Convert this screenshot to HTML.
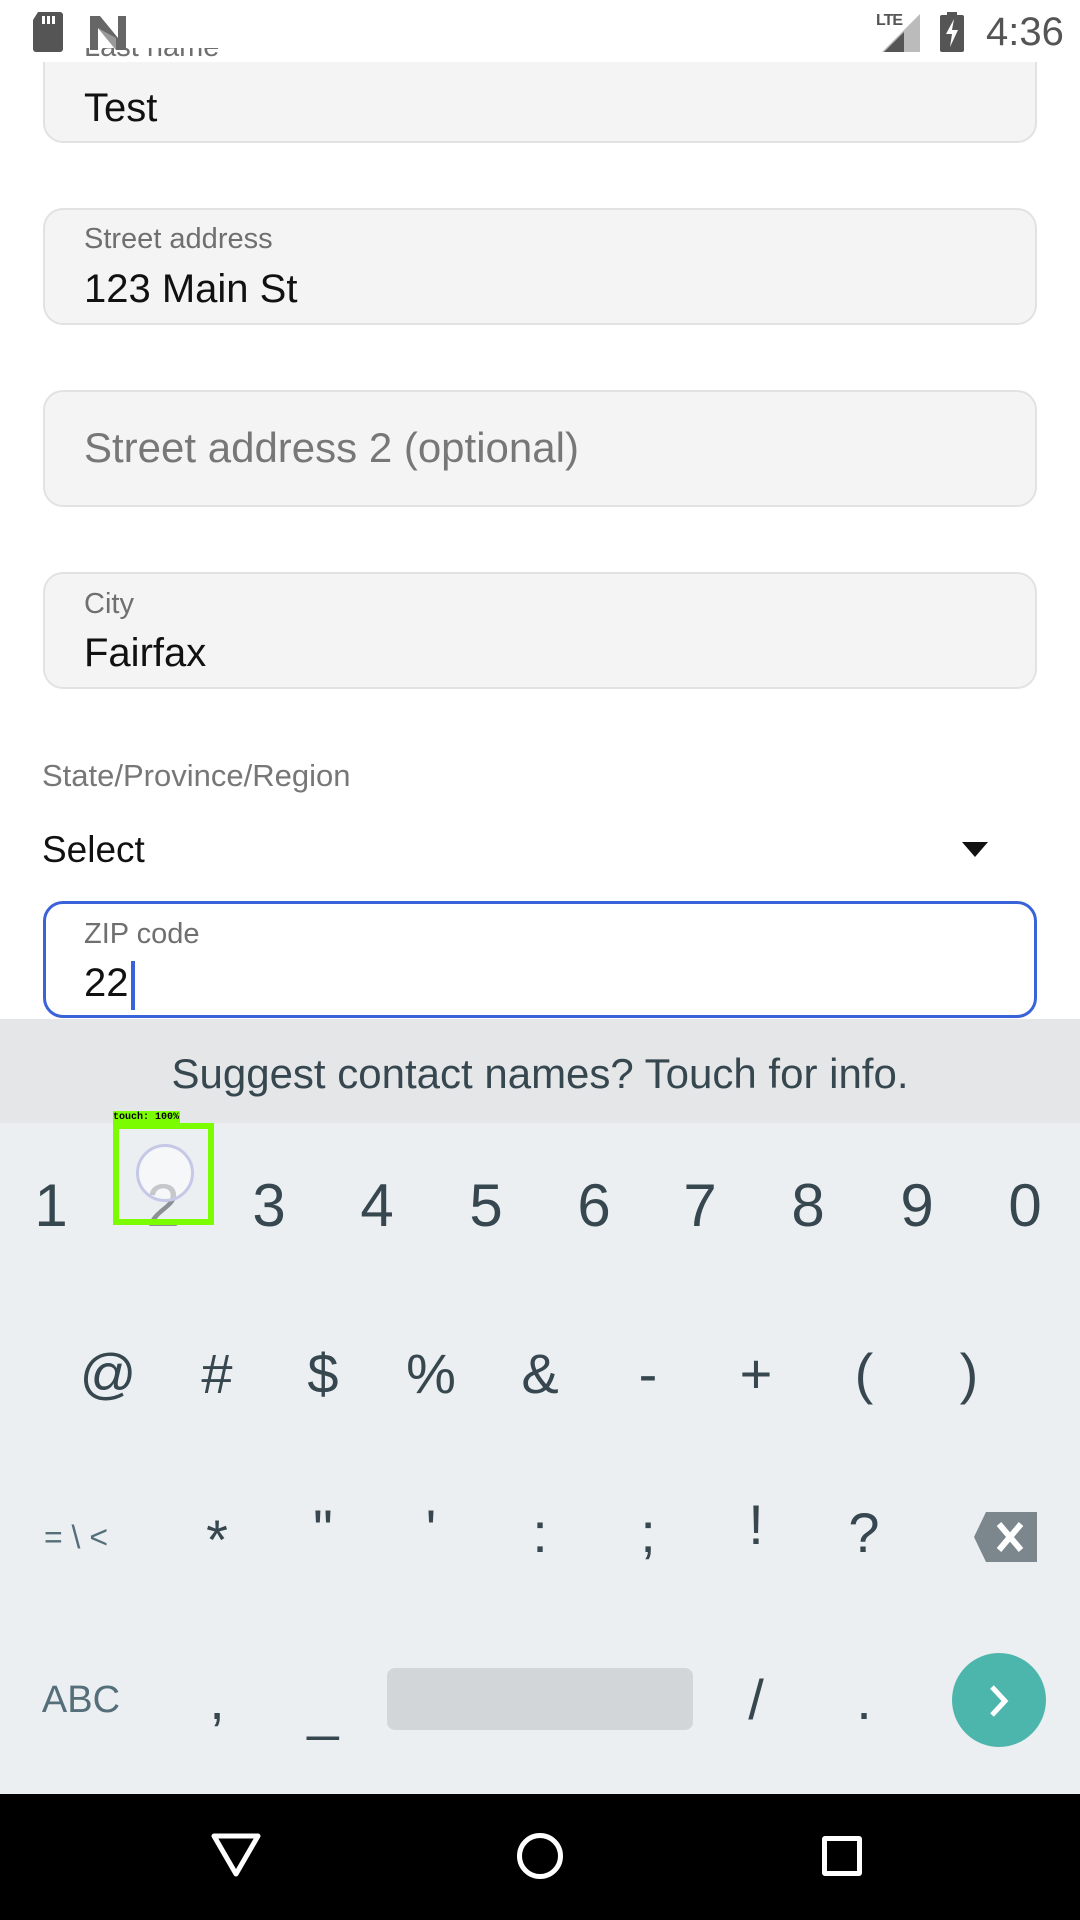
<!DOCTYPE html>
<html><head><meta charset="utf-8"><style>
*{margin:0;padding:0;box-sizing:border-box}
body{width:1080px;height:1920px;position:relative;overflow:hidden;background:#fff;font-family:"Liberation Sans",sans-serif}
.a{position:absolute}
.box{position:absolute;left:43px;width:994px;background:#f4f4f4;border:2px solid #e2e2e2;border-radius:20px}
.lbl{position:absolute;left:84px;font-size:29px;color:#6f6f6f}
.val{position:absolute;left:84px;font-size:40px;color:#111}
.k{position:absolute;transform:translate(-50%,-50%);color:#37474f;font-size:60px;line-height:1}
.s{font-size:56px}
</style></head><body>
<div class="box" style="top:20px;height:123px"></div>
<div class="a" style="left:0;top:0;width:1080px;height:62px;background:#fff"></div>
<div class="lbl" style="top:48px;height:14px;overflow:hidden;line-height:14px"><span style="position:relative;top:-8px">Last name</span></div>
<div class="val" style="top:86px">Test</div>
<svg class="a" style="left:30px;top:12px" width="36" height="40"><path d="M8 0H30a3 3 0 0 1 3 3V37a3 3 0 0 1-3 3H6a3 3 0 0 1-3-3V8Z" fill="#555"/><rect x="12" y="4" width="3" height="8" fill="#fff"/><rect x="17" y="4" width="3" height="8" fill="#fff"/><rect x="22" y="4" width="3" height="8" fill="#fff"/></svg>
<svg class="a" style="left:88px;top:14px" width="42" height="36"><path d="M2 2h10l18 22V2h8v34H28L10 14v22H2Z" fill="#666"/><path d="M10 14l18 22V24Z" fill="#999"/></svg>
<div class="a" style="left:876px;top:12px;font-size:16px;color:#555;font-weight:bold;letter-spacing:-1px">LTE</div>
<svg class="a" style="left:880px;top:14px" width="42" height="38"><path d="M40 0V38H2Z" fill="#bbb"/><path d="M24 18V38H4Z" fill="#555"/></svg>
<svg class="a" style="left:940px;top:12px" width="24" height="40"><rect x="7" y="0" width="10" height="4" fill="#555"/><rect x="0" y="3" width="24" height="37" rx="2" fill="#555"/><path d="M14 7L6 22h6l-2 13 8-17h-6z" fill="#fff"/></svg>
<div class="a" style="left:986px;top:10px;font-size:40px;color:#555">4:36</div>

<div class="box" style="top:208px;height:117px"></div>
<div class="lbl" style="top:223px">Street address</div>
<div class="val" style="top:267px">123 Main St</div>
<div class="box" style="top:390px;height:117px"></div>
<div class="a" style="left:84px;top:424px;font-size:42px;color:#777">Street address 2 (optional)</div>
<div class="box" style="top:572px;height:117px"></div>
<div class="lbl" style="top:588px">City</div>
<div class="val" style="top:631px">Fairfax</div>
<div class="a" style="left:42px;top:758px;font-size:31px;color:#777">State/Province/Region</div>
<div class="a" style="left:42px;top:829px;font-size:37px;color:#111">Select</div>
<svg class="a" style="left:962px;top:842px" width="26" height="16"><path d="M0 0H26L13 15Z" fill="#111"/></svg>
<div class="box" style="top:901px;height:117px;background:#fff;border:3px solid #3b63d9"></div>
<div class="lbl" style="top:918px">ZIP code</div>
<div class="val" style="top:961px">22</div>
<div class="a" style="left:131px;top:961px;width:4px;height:49px;background:#3b63d9"></div>

<div class="a" style="left:0;top:1019px;width:1080px;height:104px;background:#e4e6e8"></div>
<div class="a" style="left:0;top:1050px;width:1080px;text-align:center;font-size:42px;color:#37474f">Suggest contact names? Touch for info.</div>
<div class="a" style="left:0;top:1123px;width:1080px;height:671px;background:#eceff1"></div>
<div class="k" style="left:51px;top:1206px">1</div>
<div class="k" style="left:163px;top:1206px;color:#8a9096">2</div>
<div class="k" style="left:269px;top:1206px">3</div>
<div class="k" style="left:377px;top:1206px">4</div>
<div class="k" style="left:486px;top:1206px">5</div>
<div class="k" style="left:594px;top:1206px">6</div>
<div class="k" style="left:700px;top:1206px">7</div>
<div class="k" style="left:808px;top:1206px">8</div>
<div class="k" style="left:917px;top:1206px">9</div>
<div class="k" style="left:1025px;top:1206px">0</div>
<div class="k s" style="left:108px;top:1374px">@</div>
<div class="k s" style="left:217px;top:1374px">#</div>
<div class="k s" style="left:323px;top:1374px">$</div>
<div class="k s" style="left:431px;top:1374px">%</div>
<div class="k s" style="left:540px;top:1374px">&amp;</div>
<div class="k s" style="left:648px;top:1374px">-</div>
<div class="k s" style="left:756px;top:1374px">+</div>
<div class="k s" style="left:864px;top:1374px">(</div>
<div class="k s" style="left:969px;top:1374px">)</div>
<div class="k" style="left:76px;top:1537px;font-size:32px;color:#546e7a">= \ &lt;</div>
<div class="k s" style="left:217px;top:1540px">*</div>
<div class="k s" style="left:323px;top:1530px">"</div>
<div class="k s" style="left:431px;top:1530px">'</div>
<div class="k s" style="left:540px;top:1533px">:</div>
<div class="k s" style="left:648px;top:1533px">;</div>
<div class="k s" style="left:756px;top:1525px">!</div>
<div class="k s" style="left:864px;top:1533px">?</div>
<svg class="a" style="left:974px;top:1512px" width="63" height="50"><path d="M12 0H63V50H12L0 25Z" fill="#7b878d"/><path d="M25 12l22 26M47 12L25 38" stroke="#fff" stroke-width="6"/></svg>
<div class="k" style="left:81px;top:1700px;font-size:38px;color:#546e7a">ABC</div>
<div class="k s" style="left:217px;top:1700px">,</div>
<div class="k s" style="left:323px;top:1710px">_</div>
<div class="a" style="left:387px;top:1668px;width:306px;height:62px;background:#d2d6d9;border-radius:8px"></div>
<div class="k s" style="left:756px;top:1700px">/</div>
<div class="k s" style="left:864px;top:1700px">.</div>
<div class="a" style="left:952px;top:1653px;width:94px;height:94px;border-radius:50%;background:#4db6ac"></div>
<svg class="a" style="left:986px;top:1684px" width="26" height="34"><path d="M6 3l13 14L6 31" stroke="#fff" stroke-width="5" fill="none"/></svg>

<div class="a" style="left:136px;top:1144px;width:58px;height:58px;border-radius:50%;border:3px solid #c5c8e6;background:rgba(255,255,255,.5)"></div>
<div class="a" style="left:113px;top:1123px;width:101px;height:102px;border:6px solid #7cfc00"></div>
<div class="a" style="left:113px;top:1111px;width:67px;height:13px;background:#7cfc00;font-family:'Liberation Mono',monospace;font-size:10px;font-weight:bold;line-height:13px;color:#000">touch: 100%</div>

<div class="a" style="left:0;top:1794px;width:1080px;height:126px;background:#000"></div>
<svg class="a" style="left:210px;top:1832px" width="52" height="46"><path d="M4 4H48L26 42Z" stroke="#fff" stroke-width="5" fill="none" stroke-linejoin="round"/></svg>
<div class="a" style="left:517px;top:1833px;width:46px;height:46px;border-radius:50%;border:5px solid #fff"></div>
<div class="a" style="left:822px;top:1836px;width:40px;height:40px;border:5px solid #fff;border-radius:3px"></div>
</body></html>
